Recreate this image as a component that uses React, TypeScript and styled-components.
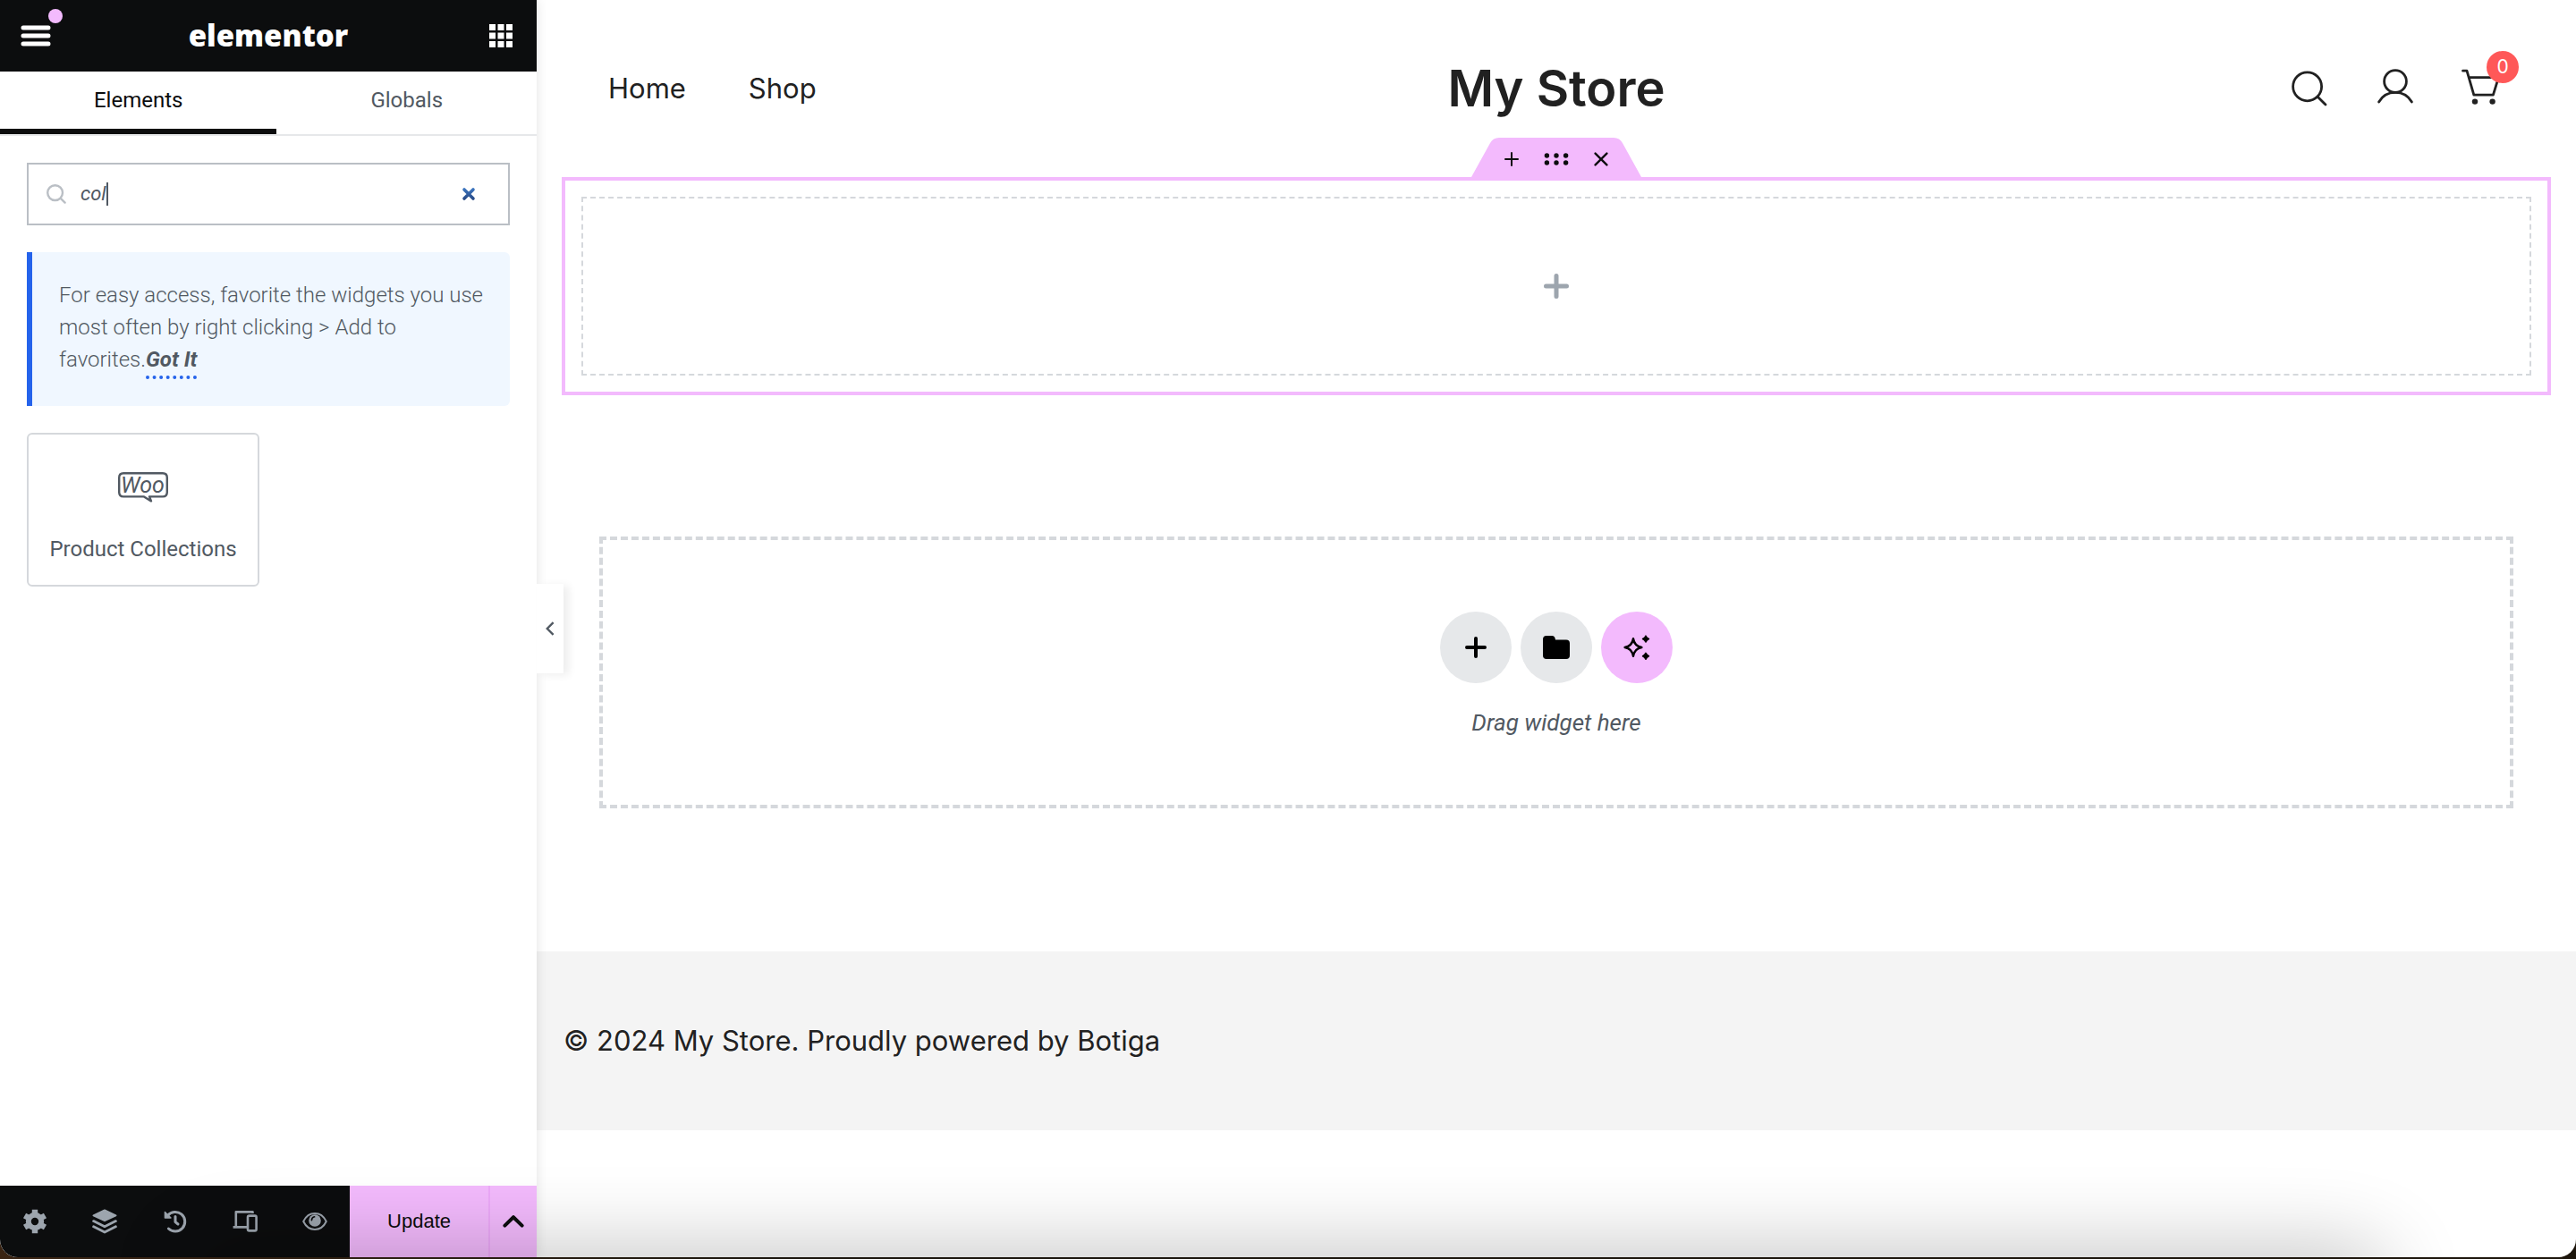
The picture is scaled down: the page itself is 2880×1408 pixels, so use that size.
import React, { useState } from "react";
import styled, { createGlobalStyle, css } from "styled-components";

const ink = "#0c0d0e";
const slate = "#515962";
const mist = "#9da5ae";
const pink = "#f3bafd";
const line = "#d5d8dc";
const storeInk = "#212121";
const ui = `Roboto, "Liberation Sans", sans-serif`;
const store = `Inter, "Liberation Sans", sans-serif`;

const GlobalStyle = createGlobalStyle`
  *, *::before, *::after { box-sizing: border-box; }
  body { margin: 0; background: #1e150c; }
  button, input { font: inherit; color: inherit; margin: 0; padding: 0; border: 0; background: none; }
  button { cursor: pointer; }
  svg { display: block; flex: none; }
`;

const Desktop = styled.div`
  min-height: 100vh;
  padding-bottom: 2px;
  display: flex;
  background: linear-gradient(90deg, #3a2413, #1a150c 30%, #1c150b);
`;

const Window = styled.div`
  position: relative;
  flex: 1;
  display: grid;
  grid-template-columns: 600px minmax(0, 1fr);
  background: #fff;
  border-radius: 0 0 20px 20px;
  overflow: hidden;
`;

const Haze = styled.div`
  position: absolute;
  left: 220px;
  right: 220px;
  bottom: -60px;
  height: 60px;
  border-radius: 30px;
  box-shadow: 0 0 90px 10px rgba(0, 0, 0, 0.24);
  pointer-events: none;
  z-index: 5;
`;

/* ---------- editor panel ---------- */

const Panel = styled.aside`
  position: relative;
  z-index: 2;
  display: flex;
  flex-direction: column;
  background: #fff;
  box-shadow: 0 0 12px rgba(0, 0, 0, 0.12);
  font-family: ${ui};
  font-size: 24px;
  line-height: 36px;
  color: ${slate};
`;

const PanelHeader = styled.header`
  display: flex;
  align-items: center;
  justify-content: space-between;
  height: 80px;
  padding: 0 22px;
  background: ${ink};
  color: #fff;
`;

const HeaderButton = styled.button`
  position: relative;
  display: flex;
  align-items: center;
  justify-content: center;
  width: 36px;
  height: 36px;
`;

const Dot = styled.span`
  position: absolute;
  top: -12px;
  right: -12px;
  width: 16px;
  height: 16px;
  border-radius: 50%;
  background: ${pink};
`;

const Logo = styled.span`
  font-family: "Open Sans", ${ui};
  font-weight: 800;
  font-size: 33px;
  line-height: 40px;
`;

const Tabs = styled.div`
  display: flex;
  height: 72px;
  border-bottom: 2px solid #e6e8ea;
`;

const Tab = styled.button<{ $active?: boolean }>`
  flex: 1 1 auto;
  border-bottom: 6px solid transparent;
  font-weight: 400;
  ${(p) => p.$active && css`
    color: ${ink};
    border-color: ${ink};
  `}
`;

const PanelBody = styled.div`
  flex: 1;
  display: flex;
  flex-direction: column;
  gap: 30px;
  padding: 30px;
`;

const SearchBox = styled.label`
  display: flex;
  align-items: center;
  height: 70px;
  padding: 0 36px 0 20px;
  border: 2px solid #babfc5;
  color: #babfc5;
`;

const SearchInput = styled.input`
  field-sizing: content;
  margin-left: 16px;
  outline: none;
  font-size: 22px;
  font-style: italic;
  color: ${slate};
`;

const Caret = styled.span`
  width: 2px;
  height: 26px;
  background: ${slate};
`;

const ClearButton = styled.button`
  margin-left: auto;
`;

const Notice = styled.div`
  padding: 30px 24px 34px 30px;
  border-left: 6px solid #2563eb;
  border-radius: 0 6px 6px 0;
  background: #f0f7ff;
  font-weight: 300;
`;

const GotIt = styled.a`
  padding-bottom: 4px;
  border-bottom: 4px dotted #2563eb;
  color: ${slate};
  font-weight: 700;
  font-style: italic;
  text-decoration: none;
`;

const Widgets = styled.div`
  display: grid;
  grid-template-columns: 1fr 1fr;
  gap: 20px;
`;

const Widget = styled.button`
  display: flex;
  flex-direction: column;
  align-items: center;
  justify-content: space-between;
  height: 172px;
  padding: 42px 8px 22px;
  border: 2px solid ${line};
  border-radius: 6px;
  color: ${slate};
  white-space: nowrap;
`;

const PanelFooter = styled.footer`
  display: flex;
  height: 80px;
  background: ${ink};
  color: ${mist};
`;

const Tool = styled.button`
  flex: 1;
  display: flex;
  align-items: center;
  justify-content: center;
`;

const Update = styled.button`
  width: 157px;
  border-right: 2px solid #eda9f9;
  background: ${pink};
  color: ${ink};
  font-family: "Liberation Sans", Arial, sans-serif;
  font-size: 22px;
`;

const UpdateMore = styled.button`
  display: flex;
  align-items: center;
  justify-content: center;
  width: 52px;
  background: ${pink};
  color: ${ink};
`;

const Collapse = styled.button`
  position: absolute;
  left: 100%;
  top: calc(50% - 50px);
  display: flex;
  align-items: center;
  justify-content: center;
  width: 30px;
  height: 100px;
  background: #fff;
  box-shadow: 6px 2px 10px rgba(0, 0, 0, 0.07);
  color: ${slate};
`;

/* ---------- page preview ---------- */

const Preview = styled.main`
  min-width: 0;
  font-family: ${store};
  font-size: 31px;
  line-height: 48px;
  color: ${storeInk};
`;

const StoreHeader = styled.header`
  display: grid;
  grid-template-columns: 1fr auto 1fr;
  align-items: center;
  height: 198px;
  padding: 0 80px;
`;

const Nav = styled.nav`
  display: flex;
  gap: 70px;
`;

const NavLink = styled.a`
  color: inherit;
  text-decoration: none;
`;

const StoreTitle = styled.h1`
  margin: 0;
  font-size: 56px;
  line-height: 72px;
  font-weight: 600;
`;

const Actions = styled.div`
  display: flex;
  justify-content: flex-end;
  gap: 50px;
`;

const Action = styled.button`
  position: relative;
`;

const Badge = styled.span`
  position: absolute;
  top: -18px;
  right: -16px;
  width: 36px;
  height: 36px;
  border-radius: 50%;
  background: #ff5858;
  color: #fff;
  font-size: 21px;
  line-height: 36px;
  text-align: center;
`;

const Section = styled.section`
  position: relative;
  margin: 0 28px;
  padding: 18px;
  border: 4px solid ${pink};
`;

const Handle = styled.div`
  position: absolute;
  left: 50%;
  bottom: calc(100% + 4px);
  transform: translateX(-50%);
  display: flex;
  align-items: center;
  justify-content: center;
  width: 190px;
  height: 44px;
  color: ${ink};
`;

const HandleShape = styled.svg`
  position: absolute;
  inset: 0;
`;

const HandleButton = styled.button`
  position: relative;
  display: flex;
  align-items: center;
  justify-content: center;
  width: 50px;
  height: 44px;
  padding-top: 4px;
`;

const EmptyColumn = styled.button`
  display: flex;
  align-items: center;
  justify-content: center;
  width: 100%;
  height: 200px;
  border: 2px dashed ${line};
  color: ${mist};
`;

const DropZone = styled.section`
  display: flex;
  flex-direction: column;
  align-items: center;
  gap: 24px;
  height: 304px;
  margin: 158px 70px 160px;
  padding-top: 80px;
  border: 4px dashed ${line};
`;

const Circles = styled.div`
  display: flex;
  gap: 10px;
`;

const Circle = styled.button<{ $tone?: string }>`
  display: flex;
  align-items: center;
  justify-content: center;
  width: 80px;
  height: 80px;
  border-radius: 50%;
  background: ${(p) => p.$tone ?? "#e6e8ea"};
  color: #000;
`;

const Hint = styled.p`
  margin: 0;
  font-family: ${ui};
  font-size: 26px;
  line-height: 40px;
  font-style: italic;
  color: ${slate};
`;

const StoreFooter = styled.footer`
  display: flex;
  align-items: center;
  height: 200px;
  padding: 0 30px;
  background: #f4f4f4;
`;

/* ---------- icons ---------- */

const Plus = ({ size, weight }: { size: number; weight: number }) => (
  <svg width={size} height={size} viewBox={`0 0 ${size} ${size}`} stroke="currentColor" strokeWidth={weight} strokeLinecap="round">
    <path d={`M${size / 2} ${weight / 2}V${size - weight / 2}M${weight / 2} ${size / 2}H${size - weight / 2}`} />
  </svg>
);

const MenuIcon = () => (
  <svg width="34" height="24" viewBox="0 0 34 24" stroke="currentColor" strokeWidth="5" strokeLinecap="round">
    <path d="M3 3H31M3 12H31M3 21H31" />
  </svg>
);

const GridIcon = () => (
  <svg width="26" height="26" viewBox="0 0 26 26" fill="currentColor">
    {[0, 9.5, 19].map((y) => [0, 9.5, 19].map((x) => <rect key={`${x}-${y}`} x={x} y={y} width="7" height="7" />))}
  </svg>
);

const FieldSearchIcon = () => (
  <svg width="22" height="22" viewBox="0 0 22 22" fill="none" stroke="currentColor" strokeWidth="2.4" strokeLinecap="round">
    <circle cx="9.6" cy="9.6" r="8.4" />
    <path d="M15.8 15.8L20.6 20.6" />
  </svg>
);

const ClearIcon = () => (
  <svg width="16" height="16" viewBox="0 0 16 16" fill="none" stroke="url(#clear)" strokeWidth="3.6" strokeLinecap="round">
    <defs>
      <linearGradient id="clear" x1="0" y1="0" x2="0" y2="16" gradientUnits="userSpaceOnUse">
        <stop offset="0" stopColor="#3f7cc8" />
        <stop offset="1" stopColor="#24427c" />
      </linearGradient>
    </defs>
    <path d="M3 3L13 13M13 3L3 13" />
  </svg>
);

const WooIcon = () => (
  <svg width="56" height="34" viewBox="0 0 56 34" fill="none" stroke="currentColor" strokeWidth="2.4" strokeLinejoin="round">
    <path d="M6 1.2H50Q54.8 1.2 54.8 6V22.6Q54.8 27.4 50 27.4H35L37 32.4L29 27.4H6Q1.2 27.4 1.2 22.6V6Q1.2 1.2 6 1.2Z" />
    <text x="27.5" y="23" textAnchor="middle" fill="currentColor" stroke="none" fontFamily="Roboto, sans-serif" fontStyle="italic" fontSize="25">
      Woo
    </text>
  </svg>
);

const GearIcon = () => (
  <svg width="28" height="28" viewBox="0 0 28 28" fill="none" stroke="currentColor">
    <circle cx="14" cy="14" r="7.2" strokeWidth="6" />
    <g strokeWidth="6.4">
      {[0, 60, 120, 180, 240, 300].map((a) => (
        <path key={a} d="M14 0.8V5" transform={`rotate(${a} 14 14)`} />
      ))}
    </g>
  </svg>
);

const LayersIcon = () => (
  <svg width="28" height="28" viewBox="0 0 28 28" fill="currentColor" stroke="currentColor" strokeLinejoin="round" strokeLinecap="round">
    <path d="M14 1.5L26.5 7.4L14 13.2L1.5 7.4Z" strokeWidth="2" />
    <path d="M1.6 13.6L14 19.8L26.4 13.6M1.6 19.8L14 26L26.4 19.8" fill="none" strokeWidth="2.8" />
  </svg>
);

const HistoryIcon = () => (
  <svg width="26" height="26" viewBox="0 0 26 26" fill="none" stroke="currentColor" strokeWidth="3" strokeLinecap="round" strokeLinejoin="round">
    <path d="M4.4 6.6A10.8 10.8 0 1 1 5.4 21" />
    <path d="M1.4 2.6V9H8Z" fill="currentColor" strokeWidth="1.4" />
    <path d="M13 7.4V13.6L16 16" />
  </svg>
);

const DevicesIcon = () => (
  <svg width="28" height="24" viewBox="0 0 28 24" fill="none" stroke="currentColor" strokeWidth="2.6" strokeLinejoin="round">
    <path d="M22.5 3V1.4H3.8V18M0.6 18.4H16" />
    <rect x="17" y="5.6" width="9.6" height="16.8" rx="1.6" />
  </svg>
);

const EyeIcon = () => (
  <svg width="28" height="20" viewBox="0 0 28 20" fill="none" stroke="currentColor" strokeWidth="2">
    <path d="M1.2 10C7 -1.9 21 -1.9 26.8 10C21 21.9 7 21.9 1.2 10Z" strokeLinejoin="round" />
    <circle cx="14" cy="9" r="6.8" fill="currentColor" stroke="none" />
    <path d="M10.4 8.6Q10.6 5.4 13.6 4.8" stroke={ink} strokeWidth="1.6" strokeLinecap="round" />
  </svg>
);

const ChevronUp = () => (
  <svg width="24" height="14" viewBox="0 0 24 14" fill="none" stroke="currentColor" strokeWidth="4" strokeLinecap="round" strokeLinejoin="round">
    <path d="M2.4 11.6L12 2.2L21.6 11.6" />
  </svg>
);

const ChevronLeft = () => (
  <svg width="10" height="16" viewBox="0 0 10 16" fill="none" stroke="currentColor" strokeWidth="2.4">
    <path d="M8.6 1.2L1.8 8L8.6 14.8" />
  </svg>
);

const SearchIcon = () => (
  <svg width="48" height="48" viewBox="0 0 48 48" fill="none" stroke="currentColor" strokeWidth="2.8" strokeLinecap="round">
    <circle cx="23.6" cy="21.8" r="16" />
    <path d="M35.2 33.2L44 42" />
  </svg>
);

const UserIcon = () => (
  <svg width="48" height="48" viewBox="0 0 48 48" fill="none" stroke="currentColor" strokeWidth="2.8" strokeLinecap="round">
    <circle cx="24" cy="16" r="12.4" />
    <path d="M5.6 39C10 31.4 16.4 28.4 24 28.4S38 31.4 42.4 39" />
  </svg>
);

const CartIcon = () => (
  <svg width="48" height="48" viewBox="0 0 48 48" fill="none" stroke="currentColor" strokeWidth="2.8" strokeLinecap="round" strokeLinejoin="round">
    <path d="M1.5 4.2H6L13.8 31.2H35.4L41.4 11.6H8.4" />
    <circle cx="15" cy="38.6" r="3.2" fill="currentColor" stroke="none" />
    <circle cx="34.6" cy="38.6" r="3.2" fill="currentColor" stroke="none" />
  </svg>
);

const DotsIcon = () => (
  <svg width="28" height="14" viewBox="0 0 28 14" fill="currentColor">
    {[3, 11].map((y) => [3.4, 14, 24.6].map((x) => <circle key={`${x}-${y}`} cx={x} cy={y} r="2.7" />))}
  </svg>
);

const CrossIcon = () => (
  <svg width="16" height="16" viewBox="0 0 16 16" stroke="currentColor" strokeWidth="2.4" strokeLinecap="round">
    <path d="M1.6 1.6L14.4 14.4M14.4 1.6L1.6 14.4" />
  </svg>
);

const FolderIcon = () => (
  <svg width="30" height="26" viewBox="0 0 30 26" fill="currentColor">
    <path d="M4 0H10Q13.4 0 14 4.4H26Q30 4.4 30 8.4V22Q30 26 26 26H4Q0 26 0 22V4Q0 0 4 0Z" />
  </svg>
);

const SparklesIcon = () => (
  <svg width="30" height="30" viewBox="0 0 30 30" fill="none" stroke="currentColor" strokeWidth="2.4" strokeLinejoin="round">
    <path d="M11 5.2Q12.4 13.6 20.4 15Q12.4 16.4 11 24.8Q9.6 16.4 1.6 15Q9.6 13.6 11 5.2Z" />
    <path d="M25 2.2Q26 4.6 28.4 5.6Q26 6.6 25 9Q24 6.6 21.6 5.6Q24 4.6 25 2.2ZM25 21.4Q26 23.8 28.4 24.8Q26 25.8 25 28.2Q24 25.8 21.6 24.8Q24 23.8 25 21.4Z" fill="currentColor" strokeWidth="1.6" />
  </svg>
);

const tools = [
  { label: "Settings", icon: <GearIcon /> },
  { label: "Structure", icon: <LayersIcon /> },
  { label: "History", icon: <HistoryIcon /> },
  { label: "Responsive mode", icon: <DevicesIcon /> },
  { label: "Preview changes", icon: <EyeIcon /> },
];

export default function App() {
  const [query, setQuery] = useState("col");

  return (
    <>
      <GlobalStyle />
      <Desktop>
        <Window>
          <Panel>
            <PanelHeader>
              <HeaderButton aria-label="Menu">
                <MenuIcon />
                <Dot />
              </HeaderButton>
              <Logo>elementor</Logo>
              <HeaderButton aria-label="Widgets panel">
                <GridIcon />
              </HeaderButton>
            </PanelHeader>
            <Tabs>
              <Tab $active>Elements</Tab>
              <Tab>Globals</Tab>
            </Tabs>
            <PanelBody>
              <SearchBox>
                <FieldSearchIcon />
                <SearchInput aria-label="Search widget" value={query} onChange={(e) => setQuery(e.target.value)} />
                <Caret />
                <ClearButton aria-label="Clear search" onClick={() => setQuery("")}>
                  <ClearIcon />
                </ClearButton>
              </SearchBox>
              <Notice>
                For easy access, favorite the widgets you use most often by right clicking &gt; Add to favorites.
                <GotIt href="#">Got It</GotIt>
              </Notice>
              <Widgets>
                <Widget>
                  <WooIcon />
                  Product Collections
                </Widget>
              </Widgets>
            </PanelBody>
            <PanelFooter>
              {tools.map((tool) => (
                <Tool key={tool.label} aria-label={tool.label}>
                  {tool.icon}
                </Tool>
              ))}
              <Update>Update</Update>
              <UpdateMore aria-label="Save options">
                <ChevronUp />
              </UpdateMore>
            </PanelFooter>
            <Collapse aria-label="Hide panel">
              <ChevronLeft />
            </Collapse>
          </Panel>

          <Preview>
            <StoreHeader>
              <Nav>
                <NavLink href="#">Home</NavLink>
                <NavLink href="#">Shop</NavLink>
              </Nav>
              <StoreTitle>My Store</StoreTitle>
              <Actions>
                <Action aria-label="Search">
                  <SearchIcon />
                </Action>
                <Action aria-label="Account">
                  <UserIcon />
                </Action>
                <Action aria-label="Cart">
                  <CartIcon />
                  <Badge>0</Badge>
                </Action>
              </Actions>
            </StoreHeader>

            <Section>
              <Handle>
                <HandleShape width="190" height="44" viewBox="0 0 190 44" fill={pink}>
                  <path d="M0 44L21 6Q24 0 31 0H159Q166 0 169 6L190 44Z" />
                </HandleShape>
                <HandleButton aria-label="Add container">
                  <Plus size={16} weight={2} />
                </HandleButton>
                <HandleButton aria-label="Edit container">
                  <DotsIcon />
                </HandleButton>
                <HandleButton aria-label="Delete container">
                  <CrossIcon />
                </HandleButton>
              </Handle>
              <EmptyColumn aria-label="Add widget">
                <Plus size={28} weight={5} />
              </EmptyColumn>
            </Section>

            <DropZone>
              <Circles>
                <Circle aria-label="Add new container">
                  <Plus size={24} weight={4} />
                </Circle>
                <Circle aria-label="Add template">
                  <FolderIcon />
                </Circle>
                <Circle $tone={pink} aria-label="Build with AI">
                  <SparklesIcon />
                </Circle>
              </Circles>
              <Hint>Drag widget here</Hint>
            </DropZone>

            <StoreFooter>© 2024 My Store. Proudly powered by Botiga</StoreFooter>
          </Preview>
          <Haze />
        </Window>
      </Desktop>
    </>
  );
}
